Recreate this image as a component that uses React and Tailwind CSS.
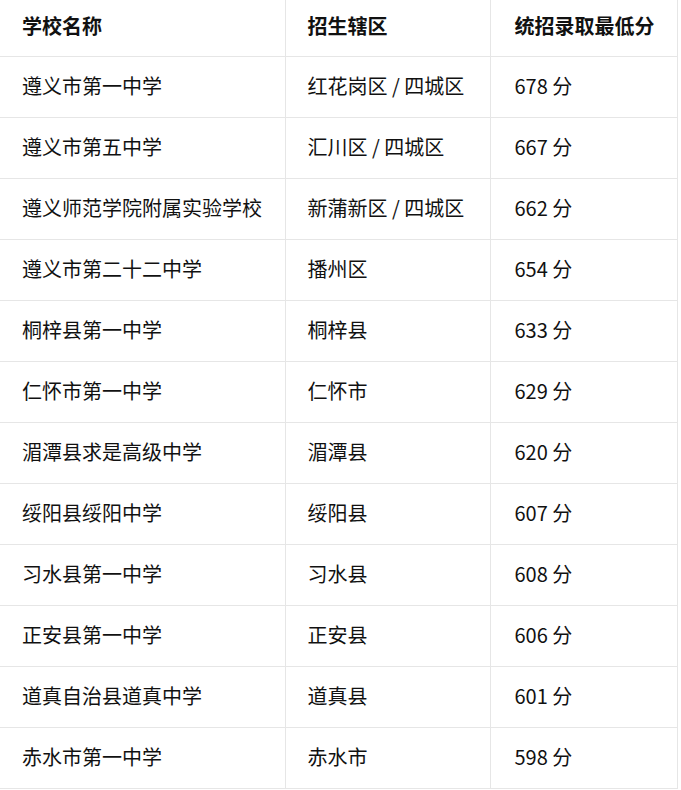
import React from 'react';

const rows = [
  ['遵义市第一中学', '红花岗区 / 四城区', '678 分'],
  ['遵义市第五中学', '汇川区 / 四城区', '667 分'],
  ['遵义师范学院附属实验学校', '新蒲新区 / 四城区', '662 分'],
  ['遵义市第二十二中学', '播州区', '654 分'],
  ['桐梓县第一中学', '桐梓县', '633 分'],
  ['仁怀市第一中学', '仁怀市', '629 分'],
  ['湄潭县求是高级中学', '湄潭县', '620 分'],
  ['绥阳县绥阳中学', '绥阳县', '607 分'],
  ['习水县第一中学', '习水县', '608 分'],
  ['正安县第一中学', '正安县', '606 分'],
  ['道真自治县道真中学', '道真县', '601 分'],
  ['赤水市第一中学', '赤水市', '598 分'],
];

const App = () => {
  return (
    <div
      className="bg-white w-[681px] min-h-[790px] text-[#111] text-[20px]"
      style={{ fontFamily: '"Noto Sans CJK SC", "Noto Sans", sans-serif' }}
    >
      <table className="w-[677px] border-collapse table-fixed">
        <colgroup>
          <col className="w-[285px]" />
          <col className="w-[205px]" />
          <col className="w-[187px]" />
        </colgroup>
        <thead>
          <tr className="h-[56px] border-b border-[#e6e6e6]">
            <th className="text-left font-bold pl-[22px] pb-[3px] border-r border-[#e6e6e6]">学校名称</th>
            <th className="text-left font-bold pl-[22px] pb-[3px] border-r border-[#e6e6e6]">招生辖区</th>
            <th className="text-left font-bold pl-[24px] pb-[3px] border-r border-[#e6e6e6]">统招录取最低分</th>
          </tr>
        </thead>
        <tbody>
          {rows.map((r, i) => (
            <tr key={i} className="h-[61px] border-b border-[#e6e6e6]">
              <td className="pl-[22px] pb-[1px] border-r border-[#e6e6e6]">{r[0]}</td>
              <td className="pl-[22px] pb-[1px] border-r border-[#e6e6e6]">{r[1]}</td>
              <td className="pl-[24px] pb-[1px] border-r border-[#e6e6e6]">{r[2]}</td>
            </tr>
          ))}
        </tbody>
      </table>
    </div>
  );
};

export default App;
